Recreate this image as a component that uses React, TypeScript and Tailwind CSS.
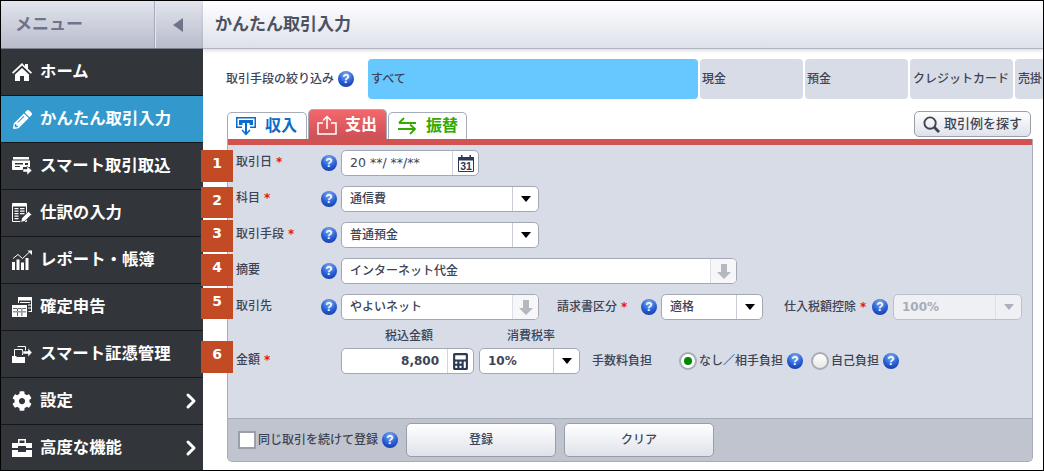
import { FaCalculator, FaCog, FaPencilAlt } from 'react-icons/fa';
import { ChevronRight } from 'lucide-react';
import type { ReactNode } from 'react';

function HomeIcon() {
  return (
    <svg viewBox="0 0 20 20" className="w-5 h-5" fill="#fff">
      <path d="M10 1 0 10.500l1.200 1.300L10 3.500l8.800 8.300 1.200-1.300-4-3.800V2h-3v2.300z" />
      <path d="M3 12.500 10 6l7 6.500V19h-5v-5H8v5H3z" />
    </svg>
  );
}

function CardIcon() {
  return (
    <svg viewBox="0 0 20 20" className="w-5 h-5" fill="#fff">
      <path d="M1 1h16v2.500H1z" />
      <path d="M0 4.500h18V11h-7v3H1a1 1 0 0 1-1-1z" />
      <path d="M3 7h8v1.500H3zM3 10h5v1H3zM13 7h3v2h-3z" fill="#32363b" />
      <path d="M11 13h4v-3l5 4.500-5 4.500v-3h-4z" stroke="#32363b" strokeWidth="0.500" />
    </svg>
  );
}

function LedgerIcon() {
  return (
    <svg viewBox="0 0 20 20" className="w-5 h-5">
      <path d="M.5.500h14v18H.5z" fill="none" stroke="#fff" />
      <path d="M1 1h13v2.500H1z" fill="#fff" />
      <path d="M2.500 5h4v1.200h-4zM8 5h4.500v1.200H8zM2.500 7.500h4v1.200h-4zM8 7.500h4.500v1.200H8zM2.500 10h4v1.200h-4zM8 10h4.500v1.200H8zM2.500 12.500h4v1.200h-4zM2.500 15h4v1.200h-4z" fill="#fff" />
      <path d="M8.500 19.500l1.200-4.500 6.800-6.800 3.300 3.300-6.800 6.800z" fill="#fff" stroke="#32363b" />
    </svg>
  );
}

function ReportIcon() {
  return (
    <svg viewBox="0 0 20 20" className="w-5 h-5" fill="#fff">
      <path d="M0 12h3v8H0zM4.500 9.500h3V20h-3zM9 12.500h3V20H9zM13.500 8h3v12h-3z" />
      <path d="M1 8.500l5-4 4.500 4 7-6.500" fill="none" stroke="#fff" />
      <path d="M15.500.5H20V5z" />
    </svg>
  );
}

function SheetsIcon() {
  return (
    <svg viewBox="0 0 20 20" className="w-5 h-5" fill="#fff">
      <path d="M6 0h14v15h-3.500v-1H19V3.500H7V6H6z" />
      <path d="M0 8h15v12H0z" />
      <path d="M1 11h13v.8H1zM1 14.500h13v.8H1zM5 11v8h.8v-8zM9.500 11v8h.8v-8z" fill="#32363b" />
      <path d="M8 5h10v1H8zM16 7.500h3v1h-3zM16 10.500h3v1h-3z" fill="#fff" />
    </svg>
  );
}

function FilesIcon() {
  return (
    <svg viewBox="0 0 20 20" className="w-5 h-5">
      <path d="M5.500 2.500h8v4M2.500 5.500h8v5.500M2.500 5.500V12" fill="none" stroke="#fff" />
      <path d="M0 12h4l1 1h8v6H0z" fill="#fff" />
      <path d="M11 7h5V4l4 4.500-4 4.500v-3h-5z" fill="#fff" stroke="#32363b" strokeWidth="0.500" />
    </svg>
  );
}

function ToolboxIcon() {
  return (
    <svg viewBox="0 0 20 20" className="w-5 h-5" fill="#fff">
      <path d="M6 1h8v4h-1.500V2.500h-5V5H6z" />
      <path d="M0 5h20v5h-6V8H6v2H0z" />
      <path d="M0 12h6v2h8v-2h6v7H0z" />
    </svg>
  );
}

function CalendarIcon() {
  return (
    <svg viewBox="0 0 16 17" className="w-4 h-[17px]">
      <path d="M.5 2.500h15v14H.5z" fill="#fff" stroke="#2b3a55" />
      <path d="M0 2h16v3.500H0z" fill="#2b3a55" />
      <path d="M3 0h1.500v3H3zM11.500 0H13v3h-1.500z" fill="#2b3a55" />
      <text x="8" y="15" textAnchor="middle" fontSize="10.500" fontWeight="700" fill="#2b3a55" fontFamily="Liberation Sans, sans-serif">31</text>
    </svg>
  );
}

function HelpIcon({ className = '' }: { className?: string }) {
  return (
    <span className={`flex-none block w-4 h-4 rounded-full bg-[radial-gradient(circle_at_50%_25%,#86aef5,#2a62d8_50%,#0c2c94)] text-white text-xs leading-4 font-bold text-center font-['Liberation_Sans',sans-serif] ${className}`}>
      ?
    </span>
  );
}

function Required() {
  return <span className="text-[#ee1111] font-bold ml-1">*</span>;
}

function Caret({ disabled }: { disabled?: boolean }) {
  return (
    <span className={`flex-none w-[26px] h-full flex items-center justify-center border-l ${disabled ? 'border-[#dcdfe6]' : 'border-[#c8ccd4]'}`}>
      <span className={`w-0 h-0 border-x-[5px] border-x-transparent border-t-[6px] ${disabled ? 'border-t-[#aab0bc]' : 'border-t-black'}`} />
    </span>
  );
}

function DownArrow() {
  return (
    <span className="flex-none w-[26px] h-full flex items-center justify-center border-l border-[#dcdfe6] bg-[#f7f7f9]">
      <svg viewBox="0 0 14 15" className="w-[14px] h-[15px]" fill="#b4b8c0">
        <path d="M4 0h6v8h4l-7 7-7-7h4z" />
      </svg>
    </span>
  );
}

function Box({ className, children }: { className: string; children: ReactNode }) {
  return (
    <div className={`flex items-center h-[26px] bg-white border border-[#a4a8b4] rounded-[5px] overflow-hidden text-[#3d4456] font-medium ${className}`}>
      {children}
    </div>
  );
}

function Row({ label, required, children }: { label: string; required?: boolean; children: ReactNode }) {
  return (
    <div className="flex items-center h-[26px]">
      <div className="w-[85px] flex-none pb-[3px]">
        {label}
        {required && <Required />}
      </div>
      <HelpIcon />
      <div className="ml-1 flex items-center">{children}</div>
    </div>
  );
}

const menu = [
  { label: 'ホーム', icon: <HomeIcon /> },
  { label: 'かんたん取引入力', icon: <FaPencilAlt className="w-[19px] h-[19px]" />, active: true },
  { label: 'スマート取引取込', icon: <CardIcon /> },
  { label: '仕訳の入力', icon: <LedgerIcon /> },
  { label: 'レポート・帳簿', icon: <ReportIcon /> },
  { label: '確定申告', icon: <SheetsIcon /> },
  { label: 'スマート証憑管理', icon: <FilesIcon /> },
  { label: '設定', icon: <FaCog className="w-5 h-5" />, more: true },
  { label: '高度な機能', icon: <ToolboxIcon />, more: true },
];

const badges = [
  { n: 1, cls: 'top-[149px] h-[32px]' },
  { n: 2, cls: 'top-[186px] h-[31px]' },
  { n: 3, cls: 'top-[219px] h-[32px]' },
  { n: 4, cls: 'top-[253px] h-[32px]' },
  { n: 5, cls: 'top-[287px] h-[31px]' },
  { n: 6, cls: 'top-[340px] h-[32px]' },
];

export default function App() {
  return (
    <div className="relative w-[1044px] h-[471px] flex overflow-hidden border border-black bg-white text-xs text-[#3d4456] font-['DejaVu_Sans','Noto_Sans_CJK_JP',sans-serif]">
      {/* Sidebar */}
      <aside className="w-[202px] flex-none flex flex-col bg-[#32363b]">
        <div className="h-[48px] flex-none flex items-stretch bg-gradient-to-b from-[#e2e5ee] to-[#b8bccb] border-b border-[#7c808c] text-[#70748a]">
          <div className="w-[154px] pl-3.5 flex items-center text-[17px] font-bold border-r border-[#a6aab8]">メニュー</div>
          <div className="flex-1 flex items-center justify-center border-l border-[#e6e8ef] pr-1">
            <span className="w-0 h-0 border-y-[7px] border-y-transparent border-r-[10px] border-r-[#70748a]" />
          </div>
        </div>
        {menu.map((item) => (
          <div
            key={item.label}
            className={`h-[47px] flex-none flex items-center pl-[11px] gap-2 text-white text-[16.4px] font-bold border-b border-b-[#15171a] ${item.active ? 'bg-[#3399cc]' : ''}`}
          >
            <span className="w-5 flex justify-center">{item.icon}</span>
            <span className="flex-1 whitespace-nowrap">{item.label}</span>
            {item.more && <ChevronRight className="w-6 h-6" strokeWidth={3} />}
          </div>
        ))}
      </aside>

      {/* Main */}
      <main className="flex-1 min-w-0 flex flex-col">
        <header className="h-[48px] flex-none flex items-center pl-3 bg-gradient-to-b from-white to-[#dde1ea] border-b border-[#b0b4c0] shadow-[0_2px_3px_rgba(0,0,0,0.12)] text-[#4c5262] text-[17px] font-bold">
          かんたん取引入力
        </header>

        <div className="flex items-center mt-[10px] pl-[23px] h-10 flex-none">
          <div className="w-[142px] flex-none flex items-center gap-1 font-medium whitespace-nowrap">
            取引手段の絞り込み
            <HelpIcon />
          </div>
          <div className="flex gap-[2px] h-10 font-medium">
            <div className="w-[330px] flex items-center pl-[3px] bg-[#66c8ff] rounded-sm">すべて</div>
            <div className="w-[103px] flex items-center pl-0.5 bg-[#d8dce6] rounded-sm">現金</div>
            <div className="w-[103px] flex items-center pl-0.5 bg-[#d8dce6] rounded-sm">預金</div>
            <div className="w-[103px] flex items-center pl-[3px] bg-[#d8dce6] rounded-sm whitespace-nowrap">クレジットカード</div>
            <div className="w-[40px] flex items-center pl-[3px] bg-[#d8dce6] rounded-sm whitespace-nowrap">売掛</div>
          </div>
        </div>

        {/* Tabs */}
        <div className="ml-6 mr-3 mt-[10px] flex items-end justify-between h-[30px] flex-none">
          <div className="flex items-end gap-px text-base font-bold">
            <div className="w-[80px] h-[27px] flex items-center gap-[9px] pl-2 bg-white border border-b-0 border-[#a8acb8] rounded-t-[5px] text-[#0a6ccc]">
              <svg viewBox="0 0 20 20" className="w-5 h-5" fill="#0a6ccc">
                <path d="M0 1h20v11h-6v-1.500h4.500V2.500h-17v8H6V12H0z" />
                <path d="M3 4h14v5h-3.500V7h-7v2H3z" />
                <path d="M9 6h2v10l2.500-2.500 1 1L10 19.500 5.500 14.500l1-1L9 16z" />
              </svg>
              <span>収入</span>
            </div>
            <div className="w-[79px] h-[30px] flex items-center gap-[8px] pl-2 bg-gradient-to-b from-[#f4686c] to-[#cc5054] border border-b-0 border-[#a8acb8] rounded-t-[5px] text-white">
              <svg viewBox="0 0 20 20" className="w-5 h-5" fill="none" stroke="#fff" strokeWidth="1.500">
                <path d="M6 8H1v11h18V8h-5" />
                <path d="M10 14V2M6 5.500 10 1.500 14 5.500" />
              </svg>
              <span>支出</span>
            </div>
            <div className="w-[79px] h-[27px] flex items-center gap-[9px] pl-2 bg-white border border-b-0 border-[#a8acb8] rounded-t-[5px] text-[#33aa00]">
              <svg viewBox="0 0 20 20" className="w-5 h-5" fill="none" stroke="#33aa00" strokeWidth="1.800">
                <path d="M19 7H2M7 2 2 7M1 13h17M13 8.500 18 13l-5 5" />
              </svg>
              <span>振替</span>
            </div>
          </div>
          <div className="w-[117px] h-[26px] mb-0.5 flex items-center justify-center gap-1 bg-gradient-to-b from-white to-[#dfe2ea] border border-[#9a9eaa] rounded-[5px] text-[13px] font-medium whitespace-nowrap">
            <svg viewBox="0 0 18 18" className="w-[17px] h-[17px] flex-none" fill="none" stroke="#3d4456" strokeWidth="2">
              <circle cx="7.500" cy="7.500" r="6" />
              <path d="M12 12l5 5" strokeWidth="3" />
            </svg>
            取引例を探す
          </div>
        </div>

        {/* Panel */}
        <section className="ml-6 mr-[10px] h-[323px] flex-none flex flex-col bg-[#d8dce6] border-x border-b border-[#a8acb8] rounded-b-[5px] overflow-hidden font-medium">
          <div className="h-[6px] flex-none bg-[#d25252]" />
          <div className="flex-1 flex flex-col gap-[10px] pl-2 pt-[5px]">
            <Row label="取引日" required>
              <Box className="w-[138px]">
                <span className="flex-1 pl-2 whitespace-nowrap text-[12.5px]">20 **/ **/**</span>
                <span className="flex-none w-[26px] h-full flex items-center justify-center border-l border-[#d0d4dc]">
                  <CalendarIcon />
                </span>
              </Box>
            </Row>
            <Row label="科目" required>
              <Box className="w-[198px]">
                <span className="flex-1 pl-2">通信費</span>
                <Caret />
              </Box>
            </Row>
            <Row label="取引手段" required>
              <Box className="w-[198px]">
                <span className="flex-1 pl-2">普通預金</span>
                <Caret />
              </Box>
            </Row>
            <Row label="摘要">
              <Box className="w-[396px]">
                <span className="flex-1 pl-2">インターネット代金</span>
                <DownArrow />
              </Box>
            </Row>
            <Row label="取引先">
              <Box className="w-[198px]">
                <span className="flex-1 pl-2">やよいネット</span>
                <DownArrow />
              </Box>
              <span className="ml-[18px] w-[84px] whitespace-nowrap">
                請求書区分
                <Required />
              </span>
              <HelpIcon />
              <Box className="ml-1 w-[102px]">
                <span className="flex-1 pl-2">適格</span>
                <Caret />
              </Box>
              <span className="ml-[21px] w-[88px] whitespace-nowrap">
                仕入税額控除
                <Required />
              </span>
              <HelpIcon />
              <div className="ml-[5px] w-[129px] h-[26px] flex items-center bg-[#eef0f4] border border-[#bcc0cb] rounded-[5px] overflow-hidden text-[#a8acb8] font-bold">
                <span className="flex-1 pl-2">100%</span>
                <Caret disabled />
              </div>
            </Row>

            <div className="-mt-[2px] flex flex-col">
              <div className="flex items-center h-[16px] ml-[105px] leading-4">
                <span className="w-[138px] pl-[44px]">税込金額</span>
                <span className="pl-[28px]">消費税率</span>
              </div>
              <div className="flex items-center h-[26px] mt-1">
                <div className="w-[85px] flex-none pb-[3px]">
                  金額
                  <Required />
                </div>
                <div className="w-4 flex-none" />
                <div className="ml-1 flex items-center">
                  <Box className="w-[133px]">
                    <span className="flex-1 pr-2 text-right font-bold">8,800</span>
                    <span className="flex-none w-[26px] h-full flex items-center justify-center border-l border-[#d0d4dc]">
                      <FaCalculator className="w-[15px] h-[17px] text-[#2b3a55]" />
                    </span>
                  </Box>
                  <Box className="ml-[5px] w-[101px]">
                    <span className="flex-1 pl-2 font-bold">10%</span>
                    <Caret />
                  </Box>
                  <span className="ml-3 w-[87px] whitespace-nowrap">手数料負担</span>
                  <span className="flex-none w-[18px] h-[18px] rounded-full bg-white border-2 border-[#a8acb4] flex items-center justify-center">
                    <span className="w-2 h-2 rounded-full bg-[#008800]" />
                  </span>
                  <span className="ml-0.5 whitespace-nowrap">なし／相手負担</span>
                  <HelpIcon className="ml-1" />
                  <span className="ml-2 flex-none w-[18px] h-[18px] rounded-full bg-gradient-to-b from-white to-[#e8e8e8] border-2 border-[#a8acb4]" />
                  <span className="ml-0.5 whitespace-nowrap">自己負担</span>
                  <HelpIcon className="ml-1" />
                </div>
              </div>
            </div>
          </div>

          <div className="h-[43px] flex-none flex items-center pl-[10px] bg-[#c0c4ce] border-t border-[#a8acb8]">
            <span className="flex-none w-[18px] h-[18px] bg-white border-2 border-[#9a9ea8]" />
            <span className="ml-0.5 whitespace-nowrap">同じ取引を続けて登録</span>
            <HelpIcon className="ml-1" />
            <div className="ml-2 w-[150px] h-[34px] flex items-center justify-center bg-gradient-to-b from-white to-[#dfe2ea] border border-[#9a9eaa] rounded-[5px]">登録</div>
            <div className="ml-2 w-[150px] h-[34px] flex items-center justify-center bg-gradient-to-b from-white to-[#dfe2ea] border border-[#9a9eaa] rounded-[5px]">クリア</div>
          </div>
        </section>
      </main>

      {/* numbered annotations laid over the form */}
      {badges.map((b) => (
        <div
          key={b.n}
          className={`absolute left-[200px] w-[32px] flex items-center justify-center pb-1.5 bg-[#c24b26] text-white text-sm font-bold ${b.cls}`}
        >
          {b.n}
        </div>
      ))}
    </div>
  );
}
